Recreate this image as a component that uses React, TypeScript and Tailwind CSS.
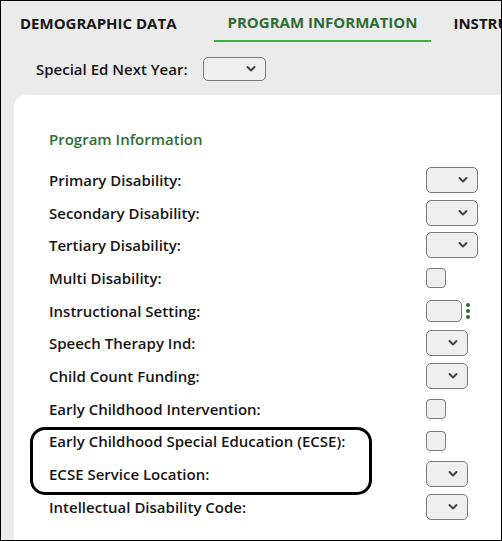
import React from "react";

const Chevron = () => (
  <svg width="10" height="7" viewBox="0 0 10 7" className="absolute right-[9px] top-1/2 -translate-y-1/2">
    <path d="M1.5 1.5 L5 5 L8.5 1.5" fill="none" stroke="#444" strokeWidth="2" strokeLinecap="round" strokeLinejoin="round" />
  </svg>
);

const Select = ({ w }: { w: string }) => (
  <div className={`relative h-[26px] ${w} rounded-[5px] border-[1.5px] border-[#7a7a7a] bg-[#efefef]`}>
    <Chevron />
  </div>
);

const Check = () => <div className="h-[20px] w-[20px] rounded-[4px] border-[1.5px] border-[#7a7a7a] bg-[#efefef]" />;

type Row = { label: string; control: React.ReactNode };

const rows: Row[] = [
  { label: "Primary Disability:", control: <Select w="w-[52px]" /> },
  { label: "Secondary Disability:", control: <Select w="w-[52px]" /> },
  { label: "Tertiary Disability:", control: <Select w="w-[52px]" /> },
  { label: "Multi Disability:", control: <Check /> },
  {
    label: "Instructional Setting:",
    control: (
      <div className="flex items-center gap-[4px]">
        <div className="h-[22px] w-[36px] rounded-[5px] border-[1.5px] border-[#7a7a7a] bg-[#efefef]" />
        <div className="flex flex-col gap-[2px]">
          <span className="block h-[4px] w-[4px] rounded-full bg-[#2e6b35]" />
          <span className="block h-[4px] w-[4px] rounded-full bg-[#2e6b35]" />
          <span className="block h-[4px] w-[4px] rounded-full bg-[#2e6b35]" />
        </div>
      </div>
    ),
  },
  { label: "Speech Therapy Ind:", control: <Select w="w-[42px]" /> },
  { label: "Child Count Funding:", control: <Select w="w-[42px]" /> },
  { label: "Early Childhood Intervention:", control: <Check /> },
  { label: "Early Childhood Special Education (ECSE):", control: <Check /> },
  { label: "ECSE Service Location:", control: <Select w="w-[42px]" /> },
  { label: "Intellectual Disability Code:", control: <Select w="w-[42px]" /> },
];

export default function App() {
  return (
    <div
      className="relative box-border h-[541px] w-[502px] overflow-hidden border border-black bg-[#ebebeb] text-[#161616]"
      style={{ fontFamily: "'Open Sans', Lato, sans-serif" }}
    >
      {/* tabs */}
      <div className="flex h-[41px] whitespace-nowrap text-[15px] font-bold">
        <div className="ml-[5px] flex h-[41px] items-center px-[14px] pt-[4px]">DEMOGRAPHIC DATA</div>
        <div className="ml-[23px] flex h-[41px] items-center border-b-2 border-[#3cb043] px-[14px] pt-[4px] text-[#2f6b34]">
          PROGRAM INFORMATION
        </div>
        <div className="ml-[8px] flex h-[41px] items-center px-[14px] pt-[4px]">INSTRUCTIONAL</div>
      </div>
      {/* special ed next year */}
      <div className="mt-[15px] flex h-[24px] items-center">
        <span className="ml-[35px] text-[15px] font-semibold leading-[24px]">Special Ed Next Year:</span>
        <div className="relative ml-[15px] h-[24px] w-[63px] rounded-[5px] border-[1.5px] border-[#7a7a7a] bg-[#efefef]">
          <Chevron />
        </div>
      </div>
      {/* panel */}
      <div className="ml-[13px] mt-[14px] h-[500px] rounded-tl-[12px] bg-white pl-[35px] pt-[34px]">
        <div className="h-[20px] text-[15px] font-semibold leading-[20px] text-[#2f6b34]">Program Information</div>
        <div className="mt-[14.6px]">
          {rows.map((r) => (
            <div key={r.label} className="flex h-[32.7px] items-center">
              <div className="w-[377px] text-[15px] font-semibold leading-[20px]">{r.label}</div>
              <div>{r.control}</div>
            </div>
          ))}
        </div>
      </div>
      {/* highlight annotation */}
      <div className="pointer-events-none absolute left-[29px] top-[426px] h-[68px] w-[342px] rounded-[15px] border-[3px] border-black" />
    </div>
  );
}
